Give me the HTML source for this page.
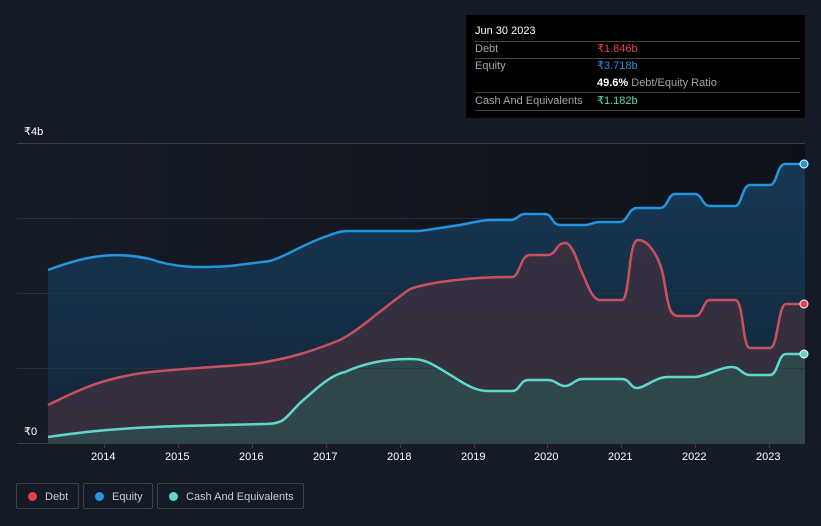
<!DOCTYPE html>
<html><head><meta charset="utf-8"><style>
body{margin:0;width:821px;height:526px;background:#151b26;overflow:hidden;font-family:"Liberation Sans",sans-serif;position:relative}
.tip{position:absolute;left:466px;top:15px;width:339px;height:103px;background:#000;color:#fff;font-size:11px}
.tip .r{position:absolute;left:9px;right:5px;height:17px;border-bottom:1px solid #444;color:#a0a4aa;line-height:17px;white-space:nowrap}
.tip .v{position:absolute;left:122px;font-weight:bold}
.leg{position:absolute;top:483px;height:26px;border:1px solid #3a404a;border-radius:2px;color:#c8ccd2;font-size:11px;line-height:26px;box-sizing:border-box;white-space:nowrap}
.leg i{position:absolute;left:11px;top:8px;width:9px;height:9px;border-radius:50%}
.ax{position:absolute;color:#fff;font-size:11px}
</style></head><body>
<svg width="821" height="526" style="position:absolute;left:0;top:0">
<defs><linearGradient id="bg" x1="0" x2="1"><stop offset="0" stop-color="#161c26"/><stop offset="1" stop-color="#0e1119"/></linearGradient>
<linearGradient id="eq" x1="0" y1="0" x2="0" y2="1"><stop offset="0" stop-color="#173a58"/><stop offset="1" stop-color="#132538"/></linearGradient></defs>
<rect x="17" y="143" width="788" height="300" fill="url(#bg)"/>
<line x1="17" y1="143.5" x2="805" y2="143.5" stroke="#3a3f48"/>
<path d="M48,270 C80,258 110,250 150,259 C175,268 200,268 230,266 L270,261 C290,255 300,245 330,235 C338,232 342,231 348,231 L420,231 L460,225 C480,221 485,220 490,220 L510,220 C518,220 518,214 525,214 L545,214 C552,214 552,225 560,225 L585,225 C592,225 592,222 600,222 L620,222 C628,222 628,208 637,208 L660,208 C668,208 668,194 675,194 L695,194 C702,194 702,206 710,206 L735,206 C742,206 742,185 750,185 L770,185 C777,185 777,164 785,164 L805,164 L805,443 L48,443Z" fill="url(#eq)" opacity="0.95"/>
<path d="M48,405 C75,392 100,378 150,372 C200,367 240,366 260,363 C290,358 310,352 340,340 C360,330 380,310 410,289 C430,282 470,277 512,277 C520,277 520,255 530,255 L548,255 C556,255 556,243 565,243 C572,243 578,262 580,268 C588,285 592,300 600,300 L622,300 C630,300 628,240 638,240 C650,240 660,260 663,275 C668,300 668,316 678,316 L695,316 C703,316 703,300 710,300 L735,300 C744,300 742,348 750,348 L770,348 C778,348 778,304 786,304 L805,304 L805,443 L48,443Z" fill="#3a3040" opacity="0.9"/>
<path d="M48,437 C90,431 120,428 180,426 L265,424 C285,424 285,418 300,403 C315,390 330,375 345,372 C365,363 385,359 410,359 C425,359 430,362 460,381 C470,387 478,391 488,391 L512,391 C520,391 520,380 528,380 L548,380 C556,380 558,386 565,386 C572,386 575,379 582,379 L622,379 C630,379 630,388 637,388 C645,388 655,377 668,377 L695,377 C705,377 720,367 732,367 C740,367 742,375 750,375 L770,375 C778,375 778,354 786,354 L805,354 L805,443 L48,443Z" fill="#2f4a50" opacity="0.85"/>
<g stroke="#2d3440" stroke-width="1" opacity="0.8"><line x1="17" y1="218.5" x2="805" y2="218.5"/><line x1="17" y1="293.5" x2="805" y2="293.5"/><line x1="17" y1="368.5" x2="805" y2="368.5"/></g>
<path d="M48,270 C80,258 110,250 150,259 C175,268 200,268 230,266 L270,261 C290,255 300,245 330,235 C338,232 342,231 348,231 L420,231 L460,225 C480,221 485,220 490,220 L510,220 C518,220 518,214 525,214 L545,214 C552,214 552,225 560,225 L585,225 C592,225 592,222 600,222 L620,222 C628,222 628,208 637,208 L660,208 C668,208 668,194 675,194 L695,194 C702,194 702,206 710,206 L735,206 C742,206 742,185 750,185 L770,185 C777,185 777,164 785,164 L805,164" fill="none" stroke="#2394df" stroke-width="2.5"/>
<path d="M48,405 C75,392 100,378 150,372 C200,367 240,366 260,363 C290,358 310,352 340,340 C360,330 380,310 410,289 C430,282 470,277 512,277 C520,277 520,255 530,255 L548,255 C556,255 556,243 565,243 C572,243 578,262 580,268 C588,285 592,300 600,300 L622,300 C630,300 628,240 638,240 C650,240 660,260 663,275 C668,300 668,316 678,316 L695,316 C703,316 703,300 710,300 L735,300 C744,300 742,348 750,348 L770,348 C778,348 778,304 786,304 L805,304" fill="none" stroke="#c9505e" stroke-width="2.5"/>
<path d="M48,437 C90,431 120,428 180,426 L265,424 C285,424 285,418 300,403 C315,390 330,375 345,372 C365,363 385,359 410,359 C425,359 430,362 460,381 C470,387 478,391 488,391 L512,391 C520,391 520,380 528,380 L548,380 C556,380 558,386 565,386 C572,386 575,379 582,379 L622,379 C630,379 630,388 637,388 C645,388 655,377 668,377 L695,377 C705,377 720,367 732,367 C740,367 742,375 750,375 L770,375 C778,375 778,354 786,354 L805,354" fill="none" stroke="#5fd9c6" stroke-width="2.5"/>
<rect x="805" y="140" width="16" height="310" fill="#151b26"/>
<circle cx="804" cy="164" r="4" fill="#2394df" stroke="#fff"/>
<circle cx="804" cy="304" r="4" fill="#e8404a" stroke="#fff"/>
<circle cx="804" cy="354" r="4" fill="#5fd9c6" stroke="#fff"/>
<line x1="17" y1="443.5" x2="805" y2="443.5" stroke="#3a3f48"/>
<g stroke="#3a3f48"><line x1="104.5" y1="443" x2="104.5" y2="448"/><line x1="178.5" y1="443" x2="178.5" y2="448"/><line x1="252.5" y1="443" x2="252.5" y2="448"/><line x1="326.5" y1="443" x2="326.5" y2="448"/><line x1="400.5" y1="443" x2="400.5" y2="448"/><line x1="474.5" y1="443" x2="474.5" y2="448"/><line x1="547.5" y1="443" x2="547.5" y2="448"/><line x1="621.5" y1="443" x2="621.5" y2="448"/><line x1="695.5" y1="443" x2="695.5" y2="448"/><line x1="769.5" y1="443" x2="769.5" y2="448"/></g>
</svg>
<div class="ax" style="left:24px;top:125px">₹4b</div>
<div class="ax" style="left:24px;top:425px">₹0</div>
<div class="ax" style="left:91px;top:451px">2014</div><div class="ax" style="left:165px;top:451px">2015</div><div class="ax" style="left:239px;top:451px">2016</div><div class="ax" style="left:313px;top:451px">2017</div><div class="ax" style="left:387px;top:451px">2018</div><div class="ax" style="left:461px;top:451px">2019</div><div class="ax" style="left:534px;top:451px">2020</div><div class="ax" style="left:608px;top:451px">2021</div><div class="ax" style="left:682px;top:451px">2022</div><div class="ax" style="left:756px;top:451px">2023</div>
<div class="tip">
<div class="r" style="top:8px;height:18px;color:#fff">Jun 30 2023</div>
<div class="r" style="top:26px">Debt<span class="v" style="color:#e8404a;font-weight:normal">₹1.846b</span></div>
<div class="r" style="top:43px;border:none">Equity<span class="v" style="color:#2394df;font-weight:normal">₹3.718b</span></div>
<div class="r" style="top:60px"><span class="v" style="color:#fff">49.6% <span style="font-weight:normal;color:#a0a4aa">Debt/Equity Ratio</span></span></div>
<div class="r" style="top:78px">Cash And Equivalents<span class="v" style="color:#5fd9c6;font-weight:normal">₹1.182b</span></div>
</div>
<div class="leg" style="left:16px;width:63px"><i style="background:#e8404a"></i><span style="position:absolute;left:28px">Debt</span></div>
<div class="leg" style="left:83px;width:70px"><i style="background:#2394df"></i><span style="position:absolute;left:28px">Equity</span></div>
<div class="leg" style="left:157px;width:147px"><i style="background:#5fd9c6"></i><span style="position:absolute;left:28px">Cash And Equivalents</span></div>
</body></html>
